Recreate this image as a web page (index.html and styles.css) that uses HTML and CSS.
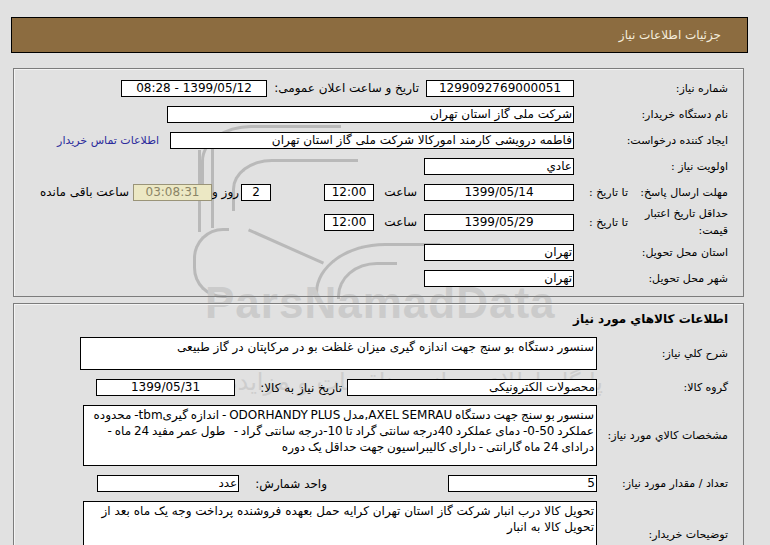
FILE: index.html
```html
<!DOCTYPE html>
<html dir="rtl">
<head>
<meta charset="utf-8">
<title>جزئیات اطلاعات نیاز</title>
<link rel="stylesheet" href="styles.css">
</head>
<body>

<!-- watermark behind the form, page coordinates -->
<div class="watermark">
  <div class="wm_stroke wm_v1"></div>
  <div class="wm_stroke wm_v2"></div>
  <div class="wm_stroke wm_arc1"></div>
  <div class="wm_stroke wm_arc2"></div>
  <div class="wm_stroke wm_loop"></div>
  <div class="wm_stroke wm_arc3"></div>
  <div class="wm_stroke wm_arc4"></div>
  <div class="wm_stroke wm_diag"></div>
  <div class="wm_brand">ParsNamadData</div>
  <div class="wm_line1">مرکز فراوری اطلاعات</div>
  <div class="wm_line2">پایگاه اطلاع رسانی مناقصات و مزایده</div>
</div>

<div class="page_title">جزئیات اطلاعات نیاز</div>

<div class="panel panel_need">
  <div class="row">
    <div class="lbl">شماره نیاز:</div>
    <div class="box w148 center">1299092769000051</div>
    <div class="txt w_announce">تاریخ و ساعت اعلان عمومی:</div>
    <div class="box w146 center">1399/05/12 - 08:28</div>
  </div>
  <div class="row">
    <div class="lbl">نام دستگاه خریدار:</div>
    <div class="box w407">شرکت ملی گاز استان تهران</div>
  </div>
  <div class="row">
    <div class="lbl">ایجاد کننده درخواست:</div>
    <div class="box w404">فاطمه درویشی کارمند امورکالا شرکت ملی گاز استان تهران</div>
    <a class="contact" href="#">اطلاعات تماس خریدار</a>
  </div>
  <div class="row">
    <div class="lbl">اولویت نیاز :</div>
    <div class="box w150">عادي</div>
  </div>
  <div class="row">
    <div class="lbl"><span class="lbl_main">مهلت ارسال پاسخ:</span><span class="lbl_sub">تا تاریخ :</span></div>
    <div class="box w150 center">1399/05/14</div>
    <div class="txt w_hour">ساعت</div>
    <div class="box w50 center">12:00</div>
    <div class="box w30 center gap_day">2</div>
    <div class="txt w_day">روز و</div>
    <div class="box w79 center remain">03:08:31</div>
    <div class="txt w_left">ساعت باقی مانده</div>
  </div>
  <div class="row row_tall">
    <div class="lbl"><span class="lbl_main">حداقل تاریخ اعتبار<br>قیمت:</span><span class="lbl_sub">تا تاریخ :</span></div>
    <div class="box w150 center">1399/05/29</div>
    <div class="txt w_hour">ساعت</div>
    <div class="box w50 center">12:00</div>
  </div>
  <div class="row">
    <div class="lbl">استان محل تحویل:</div>
    <div class="box w150">تهران</div>
  </div>
  <div class="row">
    <div class="lbl">شهر محل تحویل:</div>
    <div class="box w150">تهران</div>
  </div>
</div>

<div class="panel panel_goods">
  <div class="goods_title">اطلاعات کالاهاي مورد نیاز</div>
  <div class="grow">
    <div class="glbl">شرح کلي نیاز:</div>
    <div class="area w517 h33">سنسور دستگاه بو سنج جهت اندازه گیری میزان غلظت بو در مرکاپتان در گاز طبیعی</div>
  </div>
  <div class="grow">
    <div class="glbl">گروه کالا:</div>
    <div class="box w250">محصولات الکترونیکی</div>
    <div class="txt w_need">تاریخ نیاز به کالا:</div>
    <div class="box w139 center">1399/05/31</div>
  </div>
  <div class="grow">
    <div class="glbl">مشخصات کالاي مورد نیاز:</div>
    <div class="area w514 h61 lines">سنسور بو سنج جهت دستگاه AXEL SEMRAU,مدل ODORHANDY PLUS - اندازه گیریtbm- محدوده<br>عملکرد 50-0- دمای عملکرد 40درجه سانتی گراد تا 10-درجه سانتی گراد - &nbsp; طول عمر مفید 24 ماه -<br>درادای 24 ماه گارانتی - دارای کالیبراسیون جهت حداقل یک دوره</div>
  </div>
  <div class="grow">
    <div class="glbl">تعداد / مقدار مورد نیاز:</div>
    <div class="box w149">5</div>
    <div class="txt w_unit">واحد شمارش:</div>
    <div class="box w142">عدد</div>
  </div>
  <div class="grow">
    <div class="glbl">توضیحات خریدار:</div>
    <div class="area w514 h66">تحویل کالا درب انبار شرکت گاز استان تهران کرایه حمل بعهده فروشنده پرداخت وجه یک ماه بعد از تحویل کالا به انبار</div>
  </div>
</div>

</body>
</html>
```

FILE: styles.css
```css
body {
    margin: 0;
    background: #e1e1e1;
    font-family: Tahoma, "DejaVu Sans", sans-serif;
    font-size: 12px;
    color: #000;
    position: relative;
}

.page_title {
    margin: 17px 22px 0 11px;
    height: 36px;
    box-sizing: border-box;
    border: 1px solid #000;
    background: #8c6c40;
    color: #f4ecdc;
    font-size: 12px;
    line-height: 34px;
    padding-right: 26px;
}

.panel {
    position: relative;
    z-index: 1;
    margin: 15px 26px 0 13px;
    border: 1px solid #7c7c7c;
    box-shadow: inset 1px 1px 0 #f4f4f4;
    padding-right: 15px;
}

.panel_need {
    padding-top: 6px;
    padding-bottom: 5px;
}

.panel_goods {
    margin-top: 6px;
    padding-top: 6px;
    height: 260px;
}

/* rows of the first panel */
.row {
    display: flex;
    align-items: center;
    height: 26px;
}

.row_tall {
    height: 34px;
}

.lbl {
    width: 154px;
    flex: none;
    display: flex;
    align-items: center;
    font-size: 11px;
    white-space: nowrap;
}

.lbl_main {
    width: 98px;
    line-height: 17px;
}

.lbl_sub {
    margin-right: 2px;
}

.box {
    flex: none;
    box-sizing: border-box;
    height: 17px;
    border: 1px solid #000;
    background: #fff;
    line-height: 15px;
    padding: 0 1px;
    white-space: nowrap;
    overflow: hidden;
}

.center {
    text-align: center;
}

.txt {
    flex: none;
    white-space: nowrap;
}

.w30 { width: 30px; }
.w50 { width: 50px; margin-right: 3px; }
.w79 { width: 79px; }
.w139 { width: 139px; margin-right: 4px; }
.w142 { width: 142px; margin-right: 16px; }
.w146 { width: 146px; margin-right: 4px; }
.w148 { width: 148px; }
.w149 { width: 149px; }
.w150 { width: 150px; }
.w250 { width: 250px; }
.w404 { width: 404px; }
.w407 { width: 407px; }

.w_announce { width: 148px; margin-right: 7px; }
.w_hour { width: 40px; margin-right: 7px; }
.gap_day { margin-right: 53px; }
.w_day { width: 27px; margin-right: 2px; }
.w_left { margin-right: 4px; }
.w_need { width: 103px; margin-right: 5px; }
.w_unit { margin-right: 121px; }

.remain {
    background: #ece8c4;
    border-color: #9a9478;
    color: #8a8466;
}

.contact {
    margin-right: 11px;
    font-size: 11px;
    color: #2b2b9c;
    text-decoration: none;
}

/* second panel */
.goods_title {
    font-weight: bold;
    line-height: 18px;
    margin-bottom: 9px;
}

.grow {
    display: flex;
    align-items: center;
    margin-bottom: 9px;
}

.glbl {
    width: 131px;
    flex: none;
    font-size: 11px;
    white-space: nowrap;
}

.area {
    flex: none;
    box-sizing: border-box;
    border: 1px solid #000;
    background: #fff;
    padding: 1px 2px;
    line-height: 16px;
    overflow: hidden;
}

.lines {
    white-space: nowrap;
    word-spacing: -1px;
}

.w514 { width: 514px; }
.w517 { width: 517px; }
.h33 { height: 33px; }
.h61 { height: 61px; }
.h66 { height: 66px; }

/* watermark */
.watermark {
    position: absolute;
    left: 0;
    top: 0;
    width: 770px;
    height: 545px;
    z-index: 0;
    direction: ltr;
}

.wm_stroke {
    position: absolute;
    box-sizing: border-box;
    border: 0 solid #b9b9b9;
}

.wm_v1 { left: 198px; top: 150px; height: 82px; border-left-width: 3px; }
.wm_v2 { left: 211px; top: 145px; height: 83px; border-left-width: 3px; }

.wm_arc1 {
    left: 201px; top: 125px; width: 140px; height: 60px;
    border-top-width: 3px; border-left-width: 3px;
    border-top-left-radius: 50px 36px;
}

.wm_arc2 {
    left: 232px; top: 159px; width: 126px; height: 52px;
    border-top-width: 3px; border-left-width: 3px;
    border-top-left-radius: 40px 30px;
}

.wm_loop {
    left: 193px; top: 228px; width: 36px; height: 70px;
    border-top-width: 3px; border-left-width: 3px; border-bottom-width: 3px;
    border-radius: 30px 0 0 30px;
}

.wm_arc3 {
    left: 315px; top: 243px; width: 125px; height: 56px;
    border-top-width: 3px; border-left-width: 3px;
    border-top-left-radius: 70px 50px;
}

.wm_arc4 {
    left: 337px; top: 262px; width: 60px; height: 37px;
    border-top-width: 3px; border-left-width: 3px;
    border-top-left-radius: 40px 34px;
}

.wm_diag {
    left: 245px; top: 245px; width: 82px; height: 3px;
    border-top-width: 3px;
    transform: rotate(24deg);
}

.wm_brand {
    position: absolute;
    left: 205px;
    top: 278px;
    font-family: "Liberation Sans", Arial, sans-serif;
    font-weight: bold;
    font-size: 44px;
    letter-spacing: 1px;
    color: #cbcbcb;
}

.wm_line1 {
    position: absolute;
    left: 430px;
    top: 336px;
    font-size: 16px;
    color: #d0d0d0;
    direction: rtl;
}

.wm_line2 {
    position: absolute;
    left: 225px;
    top: 368px;
    font-size: 24px;
    color: #cdcdcd;
    direction: rtl;
}
```
